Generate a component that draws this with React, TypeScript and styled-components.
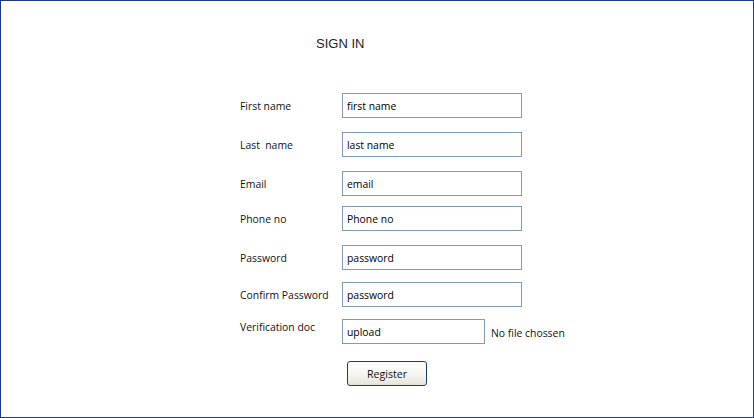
import React from "react";
import styled, { createGlobalStyle } from "styled-components";

const Global = createGlobalStyle`
  html, body { margin: 0; padding: 0; background: #fff; }
  body { font-family: "Open Sans", "Noto Sans", sans-serif; }
`;

const Frame = styled.div`
  box-sizing: border-box;
  width: 754px;
  height: 418px;
  border: 1px solid #1f3787;
  background: #fff;
  display: flex;
  flex-direction: column;
  padding-left: 239px;
`;

const Title = styled.h1`
  margin: 35px 0 0 76px;
  font-family: "Liberation Sans", Arial, sans-serif;
  font-weight: 400;
  font-size: 13px;
  line-height: 16px;
  color: #222;
`;

const Row = styled.div<{ $gap: number; $top?: boolean }>`
  display: flex;
  align-items: ${(p) => (p.$top ? "flex-start" : "center")};
  margin-top: ${(p) => p.$gap}px;
  height: 25px;
`;

const Label = styled.label<{ $top?: boolean }>`
  width: 102px;
  font-size: 10.4px;
  line-height: 14px;
  color: #111;
  white-space: pre;
  ${(p) => (p.$top ? "margin-top: 1px;" : "")}
`;

const Field = styled.div<{ $w: number }>`
  box-sizing: border-box;
  width: ${(p) => p.$w}px;
  height: 25px;
  border: 1px solid #7f9db9;
  padding-left: 4px;
  display: flex;
  align-items: center;
  font-size: 10.4px;
  color: #000;
`;

const FileNote = styled.span`
  margin-left: 6px;
  margin-top: 7px;
  font-size: 10.4px;
  color: #111;
`;

const Button = styled.button`
  margin: 17px 0 0 107px;
  box-sizing: border-box;
  width: 80px;
  height: 25px;
  border: 1px solid #1b3b6f;
  border-radius: 3px;
  background: linear-gradient(#ffffff, #f4f3ee 60%, #e6e3d9);
  font-family: "Open Sans", "Noto Sans", sans-serif;
  font-size: 10.6px;
  color: #111;
  padding: 0;
`;

const rows: { label: string; value: string; gap: number }[] = [
  { label: "First name", value: "first name", gap: 41 },
  { label: "Last  name", value: "last name", gap: 14 },
  { label: "Email", value: "email", gap: 14 },
  { label: "Phone no", value: "Phone no", gap: 10 },
  { label: "Password", value: "password", gap: 14 },
  { label: "Confirm Password", value: "password", gap: 12 },
];

export default function App() {
  return (
    <>
      <Global />
      <Frame>
        <Title>SIGN IN</Title>
        {rows.map((r, i) => (
          <Row key={i} $gap={r.gap}>
            <Label>{r.label}</Label>
            <Field $w={180}>{r.value}</Field>
          </Row>
        ))}
        <Row $gap={12} $top>
          <Label $top>Verification doc</Label>
          <Field $w={143}>upload</Field>
          <FileNote>No file chossen</FileNote>
        </Row>
        <Button>Register</Button>
      </Frame>
    </>
  );
}
